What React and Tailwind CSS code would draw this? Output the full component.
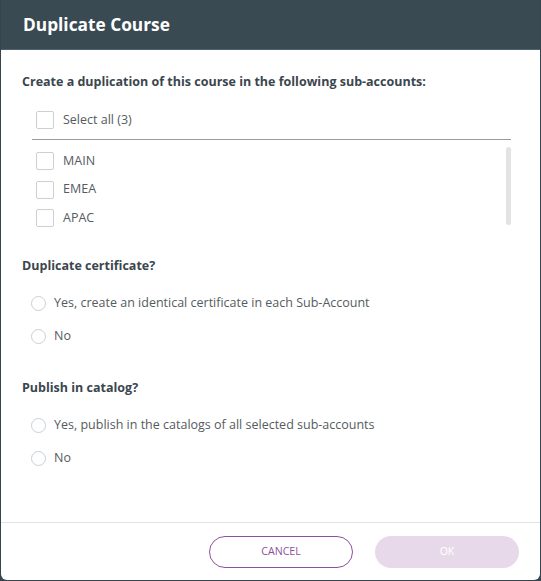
export default function App() {
  const subAccounts = ["MAIN", "EMEA", "APAC"];

  return (
    <div className="w-[541px] h-[581px] bg-[#36454d] pl-[1px]" style={{ fontFamily: '"Open Sans", "Noto Sans", sans-serif' }}>
      <div className="w-[539px] h-[580px] bg-white rounded-b-[6px] overflow-hidden flex flex-col">
        {/* Header */}
        <div className="h-[50px] shrink-0 bg-[#394a53] border-b border-[#4c6270] px-[22px] flex items-center">
          <h1 className="text-[17.3px] font-bold text-white leading-none">Duplicate Course</h1>
        </div>

        {/* Body */}
        <div className="flex-1 px-[21px] pt-[23px]">
          <p className="text-[12.5px] leading-[18px] font-bold text-[#3a464e]">
            Create a duplication of this course in the following sub-accounts:
          </p>

          <div className="w-[479px] ml-[10px] mt-[15px]">
            <label className="h-[28px] flex items-center pl-[4px] gap-[9px]">
              <span className="w-[18px] h-[18px] border border-[#cfcfcf] rounded-[2px] bg-white" />
              <span className="text-[12.5px] text-[#555b60]">Select all (3)</span>
            </label>
            <div className="mt-[5px] border-t border-[#9a9a9a]" />
            <div className="pt-[7px] flex">
              <div className="flex-1">
                {subAccounts.map((name) => (
                  <label key={name} className="h-[28.5px] flex items-center pl-[4px] gap-[9px]">
                    <span className="w-[18px] h-[18px] border border-[#cfcfcf] rounded-[2px] bg-white" />
                    <span className="text-[12.5px] text-[#555b60]">{name}</span>
                  </label>
                ))}
              </div>
              <div className="w-[5px] h-[78px] rounded-full bg-[#e3e3e3]" />
            </div>
          </div>

          <p className="mt-[24px] text-[12.5px] leading-[18px] font-bold text-[#3a464e]">Duplicate certificate?</p>
          <div className="mt-[12px] pl-[9px]">
            <RadioRow label="Yes, create an identical certificate in each Sub-Account" />
            <RadioRow label="No" />
          </div>

          <p className="mt-[26px] text-[12.5px] leading-[18px] font-bold text-[#3a464e]">Publish in catalog?</p>
          <div className="mt-[12px] pl-[9px]">
            <RadioRow label="Yes, publish in the catalogs of all selected sub-accounts" />
            <RadioRow label="No" />
          </div>
        </div>

        {/* Footer */}
        <div className="h-[58px] shrink-0 border-t border-[#e2e2e2] flex items-center justify-end gap-[22px] pr-[21px]">
          <button className="w-[144px] h-[32px] rounded-full border border-[#8e4fa0] text-[10.6px] text-[#8e4fa0] bg-white">
            CANCEL
          </button>
          <button className="w-[144px] h-[32px] rounded-full bg-[#e8d9ea] text-[10.6px] text-white">
            OK
          </button>
        </div>
      </div>
    </div>
  );
}

function RadioRow({ label }) {
  return (
    <label className="h-[33px] flex items-center gap-[8px]">
      <span className="w-[15px] h-[15px] rounded-full border border-[#c9d0d6] bg-white" />
      <span className="text-[12.5px] text-[#555b60]">{label}</span>
    </label>
  );
}
